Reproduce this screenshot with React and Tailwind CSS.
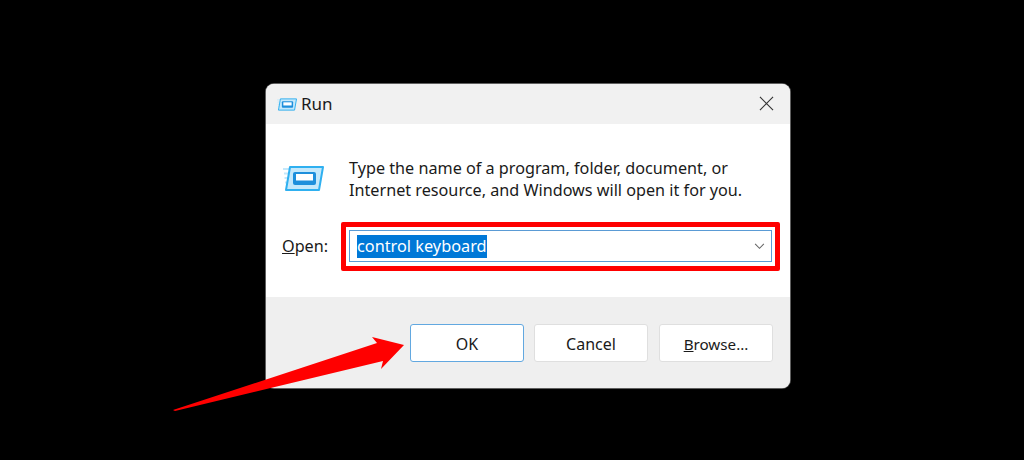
import React from 'react';

const RunIcon = ({ className }) => (
  <svg viewBox="0 0 41 25" className={className}>
    {/* speed lines */}
    <path d="M0 3h8M1 7.500h6M1.500 12h5M2 16.500h4M3 21h3" stroke="#c4e8fb" strokeWidth="1.800" fill="none" />
    <path d="M7 1H40L36 24H3Z" fill="#c5e8fb" stroke="#2fb0f0" strokeWidth="2" strokeLinejoin="round" />
    <rect x="10" y="6" width="23" height="13" rx="2" fill="#1e8fdc" />
    <rect x="13" y="8" width="17" height="6.500" fill="#ffffff" />
  </svg>
);

const DialogButton = ({ children, primary, className = 'text-[16px]' }) => (
  <button
    className={
      'w-[114px] h-[38px] pt-[2px] rounded-[3px] bg-white text-[#1a1a1a] border ' +
      (primary ? 'border-[#62a8e0] ' : 'border-[#dfdfdf] ') +
      className
    }
  >
    {children}
  </button>
);

export default function App() {
  return (
    <div className="relative w-[1024px] h-[460px] overflow-hidden bg-black pt-[84px] pl-[266px] font-['Noto_Sans',sans-serif]">
      <div className="flex flex-col w-[524px] h-[304px] rounded-[8px] overflow-hidden bg-white ring-1 ring-[#5f5f5f]">
        {/* title bar */}
        <div className="flex items-center h-[40px] bg-[#f1f1f1] pl-[11px] pr-[16px]">
          <RunIcon className="w-[20px] h-[13px]" />
          <span className="ml-[4px] text-[17px] text-[#1a1a1a]">Run</span>
          <svg viewBox="0 0 16 16" className="ml-auto w-[15px] h-[15px] mb-[1px]">
            <path d="M1 1l14 14M15 1L1 15" stroke="#333333" strokeWidth="1.200" fill="none" />
          </svg>
        </div>

        {/* body */}
        <div className="flex-1 flex flex-col">
          <div className="flex pt-[33px] pl-[17px]">
            <RunIcon className="w-[41px] h-[25px] mt-[9px]" />
            <p className="ml-[25px] text-[16.2px] leading-[22px] text-[#1a1a1a]">
              Type the name of a program, folder, document, or
              <br />
              Internet resource, and Windows will open it for you.
            </p>
          </div>
          <div className="flex items-center mt-[29px] pl-[16px]">
            <span className="w-[67px] text-[16.2px] text-[#1a1a1a]">
              <span className="underline">O</span>pen:
            </span>
            <div className="flex items-center w-[423px] h-[32px] border border-[#5a9bd5] pl-[7px] pr-[6px]">
              <span className="bg-[#0078d7] text-white text-[16.3px] leading-[23px]">control keyboard</span>
              <svg viewBox="0 0 12 8" className="ml-auto w-[11px] h-[7px]">
                <path d="M1 1l5 5 5-5" stroke="#666666" strokeWidth="1.200" fill="none" />
              </svg>
            </div>
          </div>
        </div>

        {/* buttons */}
        <div className="flex items-start h-[91px] bg-[#efefef] pt-[27px] pl-[144px] gap-[10px]">
          <DialogButton primary>OK</DialogButton>
          <DialogButton>Cancel</DialogButton>
          <DialogButton className="ml-[1px] text-[15.2px]">
            <span className="underline">B</span>rowse...
          </DialogButton>
        </div>
      </div>

      {/* red annotation box */}
      <div className="absolute left-[341px] top-[222px] w-[439px] h-[49px] border-[5px] border-[#ff0000] rounded-[2px]" />

      {/* red annotation arrow */}
      <svg viewBox="0 0 1024 460" className="absolute left-0 top-0 w-[1024px] h-[460px]">
        <path d="M173 410L377 343L372 337L404 345L381 369L383 361L175 411Z" fill="#ff0000" />
      </svg>
    </div>
  );
}
